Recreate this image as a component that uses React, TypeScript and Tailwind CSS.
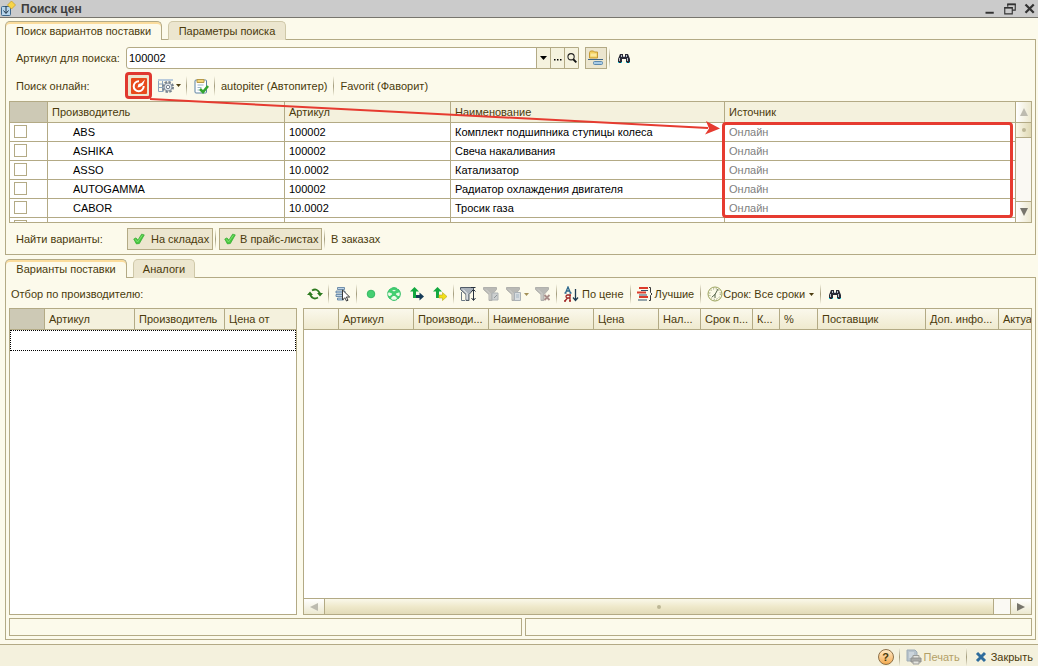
import type { ReactNode } from 'react';

const makers = [
  { maker: 'ABS', article: '100002', name: 'Комплект подшипника ступицы колеса' },
  { maker: 'ASHIKA', article: '100002', name: 'Свеча накаливания' },
  { maker: 'ASSO', article: '10.0002', name: 'Катализатор' },
  { maker: 'AUTOGAMMA', article: '100002', name: 'Радиатор охлаждения двигателя' },
  { maker: 'CABOR', article: '10.0002', name: 'Тросик газа' },
];

function Icon({ children, className = 'size-4' }: { children: ReactNode; className?: string }) {
  return (
    <svg viewBox="0 0 16 16" className={`shrink-0 ${className}`} fill="none" aria-hidden="true">
      {children}
    </svg>
  );
}

function Separator() {
  return (
    <span className="flex h-5 w-[5px] shrink-0 justify-center">
      <span className="w-px bg-linear-to-b from-[#fcfaeb] via-[#a39c7c] to-[#fcfaeb]" />
    </span>
  );
}

function IconButton({ label, children }: { label: string; children: ReactNode }) {
  return (
    <button type="button" aria-label={label} className="flex h-[22px] w-[23px] shrink-0 items-center justify-center">
      {children}
    </button>
  );
}

function Caret() {
  return (
    <svg viewBox="0 0 5 3" className="h-[3px] w-[5px] shrink-0" aria-hidden="true">
      <path d="M0 0h5L2.5 3z" fill="#4d3d10" />
    </svg>
  );
}

function Tab({ active, className, children }: { active?: boolean; className: string; children: ReactNode }) {
  return (
    <button
      type="button"
      role="tab"
      aria-selected={!!active}
      className={`h-[19px] overflow-hidden rounded-t-[5px] border border-b-0 ${className} ${
        active
          ? 'relative border-[#b3aa85] bg-[#fcfaeb] shadow-[inset_0_2px_0_#fbdc9c]'
          : 'border-[#cfc8a8] bg-[#ece6cf]'
      }`}
    >
      {children}
    </button>
  );
}

function Binoculars() {
  return (
    <Icon>
      <path d="M4 4h3v2h2V4h3l2 5v4h-4V9H6v4H2V9z" fill="#2a2a36" />
      <path d="M5 5h1v2H5zM10 5h1v2h-1zM3 8h1v3H3zM11 8h1v3h-1zM7 6h2v1H7z" fill="#b9c0ca" />
      <path d="M2 12h1v1H2zM5 12h1v1H5zM10 12h1v1h-1zM13 12h1v1h-1z" fill="#19d7e8" />
    </Icon>
  );
}

function Check() {
  return (
    <Icon className="size-3">
      <path d="M1 8l3-1.500 2.500 3L11.500 1.500 15 2.500 8.500 14l-4 .5z" fill="#48c840" stroke="#35ab32" />
      <path d="M3 8.500l3 3.500L12.500 3" stroke="#8be67d" />
    </Icon>
  );
}

function Funnel({ dim, children }: { dim?: boolean; children?: ReactNode }) {
  return (
    <Icon>
      <path d="M.5 1.500h13v2L9 8.500v6H6v-6L.5 3.500z" fill={dim ? '#b9b9b5' : '#a9b1ba'} stroke={dim ? '#b1b1ad' : '#525c68'} />
      <path d="M3 3.500l4 4v6" stroke={dim ? '#d4d4d0' : '#ffffff'} />
      {children}
    </Icon>
  );
}

const topTh = 'h-[21px] border-b border-[#b3aa85] px-1 text-left font-normal';
const cell = 'h-[19px] border-b border-r border-[#b3aa85] px-1';
const checkCell = 'h-[19px] border-b border-r border-[#b3aa85] px-1 pb-0.5';

function SearchPanel() {
  return (
    <section className="relative flex flex-col border border-[#b3aa85] px-[3px] pb-1 -mt-px">
      <div className="mt-1.5 flex h-6 items-center">
        <label htmlFor="article" className="w-[117px] shrink-0 pl-[7px]">
          Артикул для поиска:
        </label>
        <div className="flex h-[22px] w-[453px] min-w-0 overflow-hidden rounded-l-[3px] border border-[#b3aa85] bg-white">
          <input
            id="article"
            defaultValue="100002"
            className="min-w-0 flex-1 px-0.5 text-black outline-none"
          />
          <button type="button" aria-label="Список" className="flex w-3.5 items-center justify-center border-l border-[#b3aa85] bg-[#f5f2de]">
            <svg viewBox="0 0 7 4" className="h-1 w-[7px]" aria-hidden="true">
              <path d="M0 0h7L3.500 4z" fill="#000" />
            </svg>
          </button>
          <button type="button" aria-label="Выбрать" className="flex w-3.5 items-center justify-center border-l border-[#b3aa85] bg-[#f5f2de]">
            <svg viewBox="0 0 8 2" className="mt-1 h-0.5 w-2" aria-hidden="true">
              <path d="M0 0h1.500v1.500H0zM3 0h1.500v1.500H3zM6 0h1.500v1.500H6z" fill="#000" />
            </svg>
          </button>
          <button type="button" aria-label="Найти" className="flex w-3.5 items-center justify-center border-l border-[#b3aa85] bg-[#f5f2de]">
            <Icon className="size-2.5">
              <circle cx="6.500" cy="6" r="5" stroke="#222" strokeWidth="1.700" />
              <path d="M10 10l5 5" stroke="#111" strokeWidth="3" />
            </Icon>
          </button>
        </div>
        <button type="button" aria-label="Группировка" className="ml-1.5 flex size-[22px] items-center justify-center border border-[#b3aa85] bg-[#ece6cf]">
          <Icon>
            <path d="M1.500 2.500l1-1.500h3l1 1h3v6h-8z" fill="#f2cf5c" stroke="#c59a35" />
            <path d="M2.500 3.500h6v3h-6z" fill="#fbe89c" />
            <path d="M0 9.500h15" stroke="#3d6584" />
            <rect x="5.500" y="11.500" width="9" height="3" rx="1" fill="#a9cbe5" stroke="#5b88ad" />
          </Icon>
        </button>
        <Separator />
        <IconButton label="Поиск">
          <Binoculars />
        </IconButton>
      </div>

      <div className="my-[3px] flex h-[25px] items-center">
        <span className="w-[118px] shrink-0 pl-[7px]">Поиск онлайн:</span>
        <button type="button" aria-label="Найти онлайн" className="relative flex size-[23px] shrink-0 items-center justify-center border border-[#b3aa85] bg-[#ece6cf]">
          <Icon>
            <rect width="16" height="16" rx="1" fill="#e84a1b" />
            <path d="M12.700 8a5 5 0 1 1-4.700-4.700" stroke="#fff" strokeWidth="2" />
            <path d="M6.500 9.500L7.500 6l3-1L14 1.500 12 7 9 9z" fill="#fff" />
          </Icon>
          <span className="pointer-events-none absolute -inset-[3px] rounded-[4px] border-3 border-[#e0382f]" />
        </button>
        <button type="button" aria-label="Настройка" className="ml-2 flex h-[22px] w-[26px] items-center gap-0.5">
          <Icon>
            <path d="M.5 2.500h14M.5 2.500v11h5M.5 6h5M.5 9.500h5M4.500 2.500v11" stroke="#8ba4bd" />
            <path d="M0 1h15v2H0z" fill="#b9cbdc" />
            <circle cx="10" cy="9" r="5" stroke="#77838f" strokeWidth="2" strokeDasharray="2.400 1.500" />
            <circle cx="10" cy="9" r="4" fill="#dfe5ea" stroke="#87929d" />
            <circle cx="10" cy="9" r="1.700" fill="#fff" stroke="#77838f" />
          </Icon>
          <Caret />
        </button>
        <Separator />
        <IconButton label="Задание">
          <Icon>
            <rect x="2" y="2" width="11.500" height="13" rx="1" fill="#fff" stroke="#5d83a3" />
            <path d="M4 1.500h7v3H4z" fill="#f2d67a" stroke="#b89a48" />
            <path d="M4.500 7h6M4.500 9.500h4M4.500 12h2" stroke="#9cb5c9" />
            <path d="M7 11l3 3 5-6" stroke="#34a531" strokeWidth="2.600" />
          </Icon>
        </IconButton>
        <Separator />
        <button type="button" className="px-1 whitespace-nowrap">autopiter (Автопитер)</button>
        <Separator />
        <button type="button" className="px-1 whitespace-nowrap">Favorit (Фаворит)</button>
      </div>

      <div className="relative">
        <div className="flex h-[122px] border border-[#b3aa85] bg-white">
          <div className="min-w-0 flex-1 overflow-hidden">
            <table className="w-full table-fixed border-separate border-spacing-0">
              <colgroup>
                <col className="w-[38px]" />
                <col className="w-[237px]" />
                <col className="w-[166px]" />
                <col className="w-[274px]" />
                <col />
              </colgroup>
              <thead className="bg-[#f4f1dd]">
                <tr>
                  <th aria-label="Выбор" className={`${topTh} border-r bg-[#cdc9b5]`} />
                  <th className={`${topTh} border-r`}>Производитель</th>
                  <th className={`${topTh} border-r`}>Артикул</th>
                  <th className={`${topTh} border-r`}>Наименование</th>
                  <th className={`${topTh} border-r`}>Источник</th>
                </tr>
              </thead>
              <tbody className="text-black">
                {makers.map((m) => (
                  <tr key={m.maker}>
                    <td className={checkCell}>
                      <input
                        type="checkbox"
                        aria-label={m.maker}
                        className="block size-[13px] appearance-none border border-[#b3aa85] bg-white"
                      />
                    </td>
                    <td className={`${cell} pl-[25px]`}>{m.maker}</td>
                    <td className={cell}>{m.article}</td>
                    <td className={cell}>{m.name}</td>
                    <td className={`${cell} text-[#808080]`}>Онлайн</td>
                  </tr>
                ))}
                <tr>
                  <td className={checkCell}>
                    <input type="checkbox" aria-label="Следующая строка" className="block size-[13px] appearance-none border border-[#b3aa85] bg-white" />
                  </td>
                  <td className={cell} />
                  <td className={cell} />
                  <td className={cell} />
                  <td className={cell} />
                </tr>
              </tbody>
            </table>
          </div>
          <div className="flex w-[15px] shrink-0 flex-col bg-[#faf9f3]">
            <button type="button" aria-label="Вверх" className="flex h-[21px] items-center justify-center border-b border-[#b3aa85] bg-linear-to-r from-white to-[#ece8cf]">
              <svg viewBox="0 0 8 8" className="size-2" aria-hidden="true">
                <path d="M4 0l4 8H0z" fill="#bdbbb0" />
              </svg>
            </button>
            <div className="flex h-[15px] items-center justify-center border-b border-[#b3aa85] bg-linear-to-r from-[#faf8ea] to-[#e0d9b4]">
              <span className="size-1 rounded-full bg-[#bdb796]" />
            </div>
            <div className="flex-1" />
            <button type="button" aria-label="Вниз" className="flex h-[21px] items-center justify-center border-t border-[#b3aa85] bg-linear-to-r from-white to-[#ece8cf]">
              <svg viewBox="0 0 8 8" className="size-2" aria-hidden="true">
                <path d="M0 0h8L4 8z" fill="#77756c" />
              </svg>
            </button>
          </div>
        </div>
        <div className="pointer-events-none absolute top-[21px] right-[19px] left-[713px] h-24 rounded-[4px] border-3 border-[#e63b30]" />
        <svg viewBox="0 0 576 40" className="pointer-events-none absolute -top-1 left-[141px] h-10 w-[576px]" aria-hidden="true">
          <path d="M0 2L558 31" stroke="#e63b30" strokeWidth="2" />
          <path d="M556 24l14 7.500-15 6 4-6z" fill="#e63b30" />
        </svg>
      </div>

      <div className="mt-[5px] flex h-[22px] items-center">
        <span className="w-[118px] shrink-0 pl-[7px]">Найти варианты:</span>
        <button type="button" aria-pressed="true" className="flex h-[22px] w-[86px] shrink-0 items-center gap-1.5 border border-[#b3aa85] bg-[#ece6cf] pl-[5px] whitespace-nowrap">
          <Check />
          На складах
        </button>
        <Separator />
        <button type="button" aria-pressed="true" className="ml-px flex h-[22px] w-[103px] shrink-0 items-center gap-1 border border-[#b3aa85] bg-[#ece6cf] pl-1 whitespace-nowrap">
          <Check />
          В прайс-листах
        </button>
        <Separator />
        <button type="button" className="px-1 whitespace-nowrap">В заказах</button>
      </div>
    </section>
  );
}

function Toolbar() {
  return (
    <div className="flex h-full min-w-0 flex-1 items-center overflow-hidden">
      <IconButton label="Обновить">
        <Icon>
          <path d="M5 4.500q5-3 8 3M11 11.500q-5 3-8-3" stroke="#2d7a1f" strokeWidth="1.800" />
          <path d="M0 9l3-3.500L6 9zM10 7h6l-3 3.500z" fill="#2d7a1f" />
        </Icon>
      </IconButton>
      <Separator />
      <IconButton label="Выбрать строку">
        <Icon>
          <path d="M2.500 1.500h7v2h-7zM1 5h9v2H1zM1 8.500h8v2H1zM2.500 12h6v2h-6z" fill="#bfd4e7" stroke="#557a9c" strokeWidth=".8" />
          <path d="M7.500 4v10l2.300-2.300L11.500 15l1.500-.7-1.600-3.300h3.300z" fill="#fff" stroke="#3b3b3b" />
        </Icon>
      </IconButton>
      <Separator />
      <IconButton label="В наличии">
        <Icon>
          <circle cx="8" cy="8" r="3.800" fill="#45cf72" stroke="#36b964" />
        </Icon>
      </IconButton>
      <IconButton label="Группы">
        <Icon>
          <circle cx="8" cy="8" r="6.500" fill="#45cf72" />
          <path d="M2 6l4 1.500v1L4 10H1.500zM14 6l-4 1.500v1l2 1.500h2.500zM7 10h2l2 2-1 2H6l-1-2zM6 4h4l-2 1.500z" fill="#eefae8" />
          <circle cx="8" cy="8" r="6.300" stroke="#32bd67" strokeDasharray="5.600 1" />
        </Icon>
      </IconButton>
      <IconButton label="Замены">
        <Icon>
          <path d="M5.500 5v5.500H8" stroke="#12a83f" strokeWidth="3" />
          <path d="M1 5.500l4.500-4.500L10 5.500z" fill="#12a83f" />
          <path d="M7 9h3.500V6.500l4.500 4-4.500 4V12H7z" fill="#173c58" />
        </Icon>
      </IconButton>
      <IconButton label="Аналоги">
        <Icon>
          <path d="M5.500 5v5.500H8" stroke="#12a83f" strokeWidth="3" />
          <path d="M1 5.500l4.500-4.500L10 5.500z" fill="#12a83f" />
          <path d="M7 9h3.500V6.500l4.500 4-4.500 4V12H7z" fill="#f3df16" stroke="#b4a71c" strokeWidth=".6" />
        </Icon>
      </IconButton>
      <Separator />
      <IconButton label="Отбор">
        <Funnel>
          <path d="M13.500 4v10M11.500 12l2 2.500 2-2.500M11 1.500h4.500M11.500 5.500l2-2 2 2" stroke="#27313c" />
          <path d="M1.500 6v8.500H5" stroke="#6b7885" />
        </Funnel>
      </IconButton>
      <IconButton label="Отбор по значению">
        <Funnel dim>
          <path d="M9 7h6v7H9z" fill="#cdd0d0" stroke="#adb2b4" />
          <path d="M11 12l3-3" stroke="#8f9698" />
        </Funnel>
      </IconButton>
      <button type="button" aria-label="История отборов" className="flex h-[22px] w-[29px] shrink-0 items-center gap-0.5 pl-1">
        <Funnel dim>
          <path d="M8.500 6.500h6v8h-6z" fill="#d8dde0" stroke="#aab1b6" />
          <path d="M10 9h3M10 11h3" stroke="#a5b6c4" />
        </Funnel>
        <svg viewBox="0 0 5 3" className="h-[3px] w-[5px] shrink-0" aria-hidden="true">
          <path d="M0 0h5L2.500 3z" fill="#a39057" />
        </svg>
      </button>
      <IconButton label="Отключить отбор">
        <Funnel dim>
          <path d="M9.500 9l5 5M14.500 9l-5 5" stroke="#a98c88" strokeWidth="1.800" />
        </Funnel>
      </IconButton>
      <Separator />
      <button type="button" className="flex shrink-0 items-center gap-[3px] px-1 whitespace-nowrap">
        <Icon>
          <path d="M2.500 7L5 1l2.500 6M3.500 5h3M1.500 7h2M6.500 7h2" stroke="#2b668c" strokeWidth="1.300" />
          <path d="M7 9v6M7 9H4.500a1.500 1.500 0 0 0 0 3H7M4.500 12L2 15M1 15h2M6 15h2M6 9h2" stroke="#9f2525" strokeWidth="1.300" />
          <path d="M12.500 3v11M10 11.500l2.500 3 2.500-3" stroke="#1f3b52" strokeWidth="1.300" />
        </Icon>
        По цене
      </button>
      <Separator />
      <button type="button" className="flex shrink-0 items-center gap-0.5 px-1 whitespace-nowrap">
        <Icon>
          <path d="M2 2h9M0 6.500h9M2 11h9" stroke="#dc3b2b" strokeWidth="2" />
          <path d="M4 4.500h7M2 9h8M1 14h9" stroke="#31516b" strokeWidth="1.200" />
          <path d="M12 1.500h1.500v5l1.500 1.500-1.500 1.500v5H12" stroke="#3a3a3a" />
        </Icon>
        Лучшие
      </button>
      <Separator />
      <button type="button" className="flex shrink-0 items-center px-1 whitespace-nowrap">
        <Icon>
          <circle cx="8" cy="8" r="7" fill="#fbfae8" stroke="#98a05a" />
          <circle cx="8" cy="8" r="5.300" stroke="#7f875a" strokeDasharray="1 1.800" />
          <path d="M11 3L8 8.500 5 11M8 8v4" stroke="#54644b" />
        </Icon>
        <span className="mr-1">Срок: Все сроки</span>
        <Caret />
      </button>
      <Separator />
      <IconButton label="Поиск в таблице">
        <Binoculars />
      </IconButton>
    </div>
  );
}

const gridTh = 'h-[21px] whitespace-nowrap border-b border-r border-[#b3aa85] pl-1 text-left font-normal';

function VariantsPanel() {
  return (
    <section className="-mt-px flex min-h-0 flex-1 flex-col border border-[#b3aa85] px-[3px] pb-[3px]">
      <div className="mt-[3px] mb-px flex h-[26px] shrink-0 items-center">
        <span className="w-[294px] shrink-0 pl-0.5">Отбор по производителю:</span>
        <Toolbar />
      </div>
      <div className="flex min-h-0 flex-1 gap-1.5">
        <div className="w-72 shrink-0 overflow-hidden border border-[#b3aa85] bg-white">
          <table className="w-full table-fixed border-separate border-spacing-0">
            <colgroup>
              <col className="w-[35px]" />
              <col className="w-[90px]" />
              <col className="w-[90px]" />
              <col />
            </colgroup>
            <thead className="bg-[#f4f1dd]">
              <tr>
                <th aria-label="Отметка" className={`${gridTh} bg-[#cdc9b5]`} />
                <th className={gridTh}>Артикул</th>
                <th className={gridTh}>Производитель</th>
                <th className="h-[21px] border-b border-[#b3aa85] px-1 text-left font-normal">Цена от</th>
              </tr>
            </thead>
            <tbody>
              <tr>
                <td colSpan={4} className="h-[21px] border border-dotted border-black" />
              </tr>
            </tbody>
          </table>
        </div>
        <div className="flex min-w-0 flex-1 flex-col border border-[#b3aa85] bg-white">
          <div className="min-h-0 flex-1 overflow-hidden">
            <table className="w-full table-fixed border-separate border-spacing-0">
              <colgroup>
                <col className="w-[35px]" />
                <col className="w-[75px]" />
                <col className="w-[75px]" />
                <col className="w-[105px]" />
                <col className="w-[65px]" />
                <col className="w-[42px]" />
                <col className="w-[52px]" />
                <col className="w-[27px]" />
                <col className="w-[38px]" />
                <col className="w-[108px]" />
                <col className="w-[73px]" />
                <col />
              </colgroup>
              <thead>
                <tr className="bg-linear-to-b from-[#faf8ec] to-[#efe9cd]">
                  <th aria-label="Строка" className={gridTh} />
                  <th className={gridTh}>Артикул</th>
                  <th className={gridTh}>Производи...</th>
                  <th className={gridTh}>Наименование</th>
                  <th className={gridTh}>Цена</th>
                  <th className={gridTh}>Нал...</th>
                  <th className={gridTh}>Срок п...</th>
                  <th className={gridTh}>К...</th>
                  <th className={gridTh}>%</th>
                  <th className={gridTh}>Поставщик</th>
                  <th className={gridTh}>Доп. инфо...</th>
                  <th className="h-[21px] border-b border-[#b3aa85] pl-1 text-left font-normal">Актуа</th>
                </tr>
              </thead>
            </table>
          </div>
          <div className="flex h-4 shrink-0 border-t border-[#b3aa85] bg-[#faf9f3]">
            <button type="button" aria-label="Влево" className="flex w-[21px] items-center justify-center border-r border-[#b3aa85] bg-linear-to-b from-white to-[#ece8cf]">
              <svg viewBox="0 0 8 8" className="size-2" aria-hidden="true">
                <path d="M8 0v8L0 4z" fill="#bdbbb0" />
              </svg>
            </button>
            <div className="flex flex-1 items-center justify-center border-r border-[#b3aa85] bg-linear-to-b from-[#faf8ea] via-[#efe9cb] to-[#e2dbb8]">
              <span className="size-1 rounded-full bg-[#bdb796]" />
            </div>
            <div className="w-4" />
            <button type="button" aria-label="Вправо" className="flex w-[21px] items-center justify-center border-l border-[#b3aa85] bg-linear-to-b from-white to-[#ece8cf]">
              <svg viewBox="0 0 8 8" className="size-2" aria-hidden="true">
                <path d="M0 0v8l8-4z" fill="#77756c" />
              </svg>
            </button>
          </div>
        </div>
      </div>
      <div className="mt-[3px] flex h-[18px] shrink-0 gap-[3px]">
        <div className="w-[513px] border border-[#b3aa85]" />
        <div className="flex-1 border border-[#b3aa85]" />
      </div>
    </section>
  );
}

export default function App() {
  return (
    <div className="flex h-screen min-h-[480px] flex-col bg-[#fcfaeb] font-['Liberation_Sans',Arial,sans-serif] text-[11px] leading-[14px] text-[#4a3a0c]">
      <header className="flex h-[18px] shrink-0 items-center border-b border-[#77756d] bg-[#cbcbcb]">
        <Icon>
          <rect x="1.500" y="5.500" width="9" height="9" rx="1" fill="#b7d5ec" stroke="#3e688c" />
          <path d="M6 5v7M3.500 9.500L6 12.500l2.500-3" stroke="#1e3446" />
          <path d="M11.500 0l4 4-4 4-4-4z" fill="#f7d548" stroke="#c69820" strokeWidth=".7" />
        </Icon>
        <h1 className="flex-1 pl-[5px] text-xs font-bold text-[#3d3d3d]">Поиск цен</h1>
        <button type="button" aria-label="Свернуть" className="flex size-4 items-center justify-center">
          <Icon className="size-3">
            <path d="M2 13h11" stroke="#333" strokeWidth="2.600" />
          </Icon>
        </button>
        <button type="button" aria-label="Восстановить" className="ml-1 flex size-4 items-center justify-center">
          <Icon className="size-3">
            <path d="M5 5V1.500h10v8h-4" stroke="#333" strokeWidth="1.500" />
            <path d="M4.500 2h11" stroke="#333" strokeWidth="2" />
            <path d="M1 6h10v8.500H1z" stroke="#333" strokeWidth="1.500" />
            <path d="M.5 6.500h11" stroke="#333" strokeWidth="2" />
          </Icon>
        </button>
        <button type="button" aria-label="Закрыть окно" className="ml-1 flex size-4 items-center justify-center">
          <Icon className="size-3">
            <path d="M2 2l11 11M13 2L2 13" stroke="#333" strokeWidth="3" />
          </Icon>
        </button>
      </header>

      <main className="flex min-h-0 flex-1 flex-col pt-[3px] pr-0.5 pb-1 pl-[5px]">
        <div role="tablist" className="z-10 flex gap-1.5">
          <Tab active className="w-[157px]">Поиск вариантов поставки</Tab>
          <Tab className="w-[118px]">Параметры поиска</Tab>
        </div>
        <SearchPanel />
        <div role="tablist" className="z-10 mt-1 flex gap-1.5">
          <Tab active className="w-[122px]">Варианты поставки</Tab>
          <Tab className="w-[62px]">Аналоги</Tab>
        </div>
        <VariantsPanel />
      </main>

      <footer className="flex h-[22px] shrink-0 items-center justify-end border-t border-[#b3aa85] bg-[#f4f1dd] pt-0.5 pr-[5px]">
        <button type="button" aria-label="Справка" className="mr-[3px] flex size-4 items-center justify-center rounded-full border border-[#8e7047] bg-linear-to-b from-[#ffe9c4] to-[#f3ab4e] text-[11px] font-bold">
          ?
        </button>
        <Separator />
        <button type="button" disabled className="flex items-center gap-0.5 px-1 text-[#b3a067]">
          <Icon>
            <path d="M1 1h8l2 2v9H1z" fill="#b7c3cc" stroke="#9facb6" />
            <path d="M3 4h5M3 6h5M3 8h3" stroke="#e1e7eb" />
            <path d="M5 9h10v4H5z" fill="#a9aaa7" stroke="#8f908d" />
            <path d="M7 6.500h6V9H7zM7 12h6v3H7z" fill="#e5e5e0" stroke="#9c9d99" />
          </Icon>
          Печать
        </button>
        <Separator />
        <button type="button" className="flex items-center gap-0.5 pl-1">
          <Icon>
            <path d="M4 4l8 8M12 4l-8 8" stroke="#2f6c9c" strokeWidth="3" />
          </Icon>
          Закрыть
        </button>
      </footer>
    </div>
  );
}
